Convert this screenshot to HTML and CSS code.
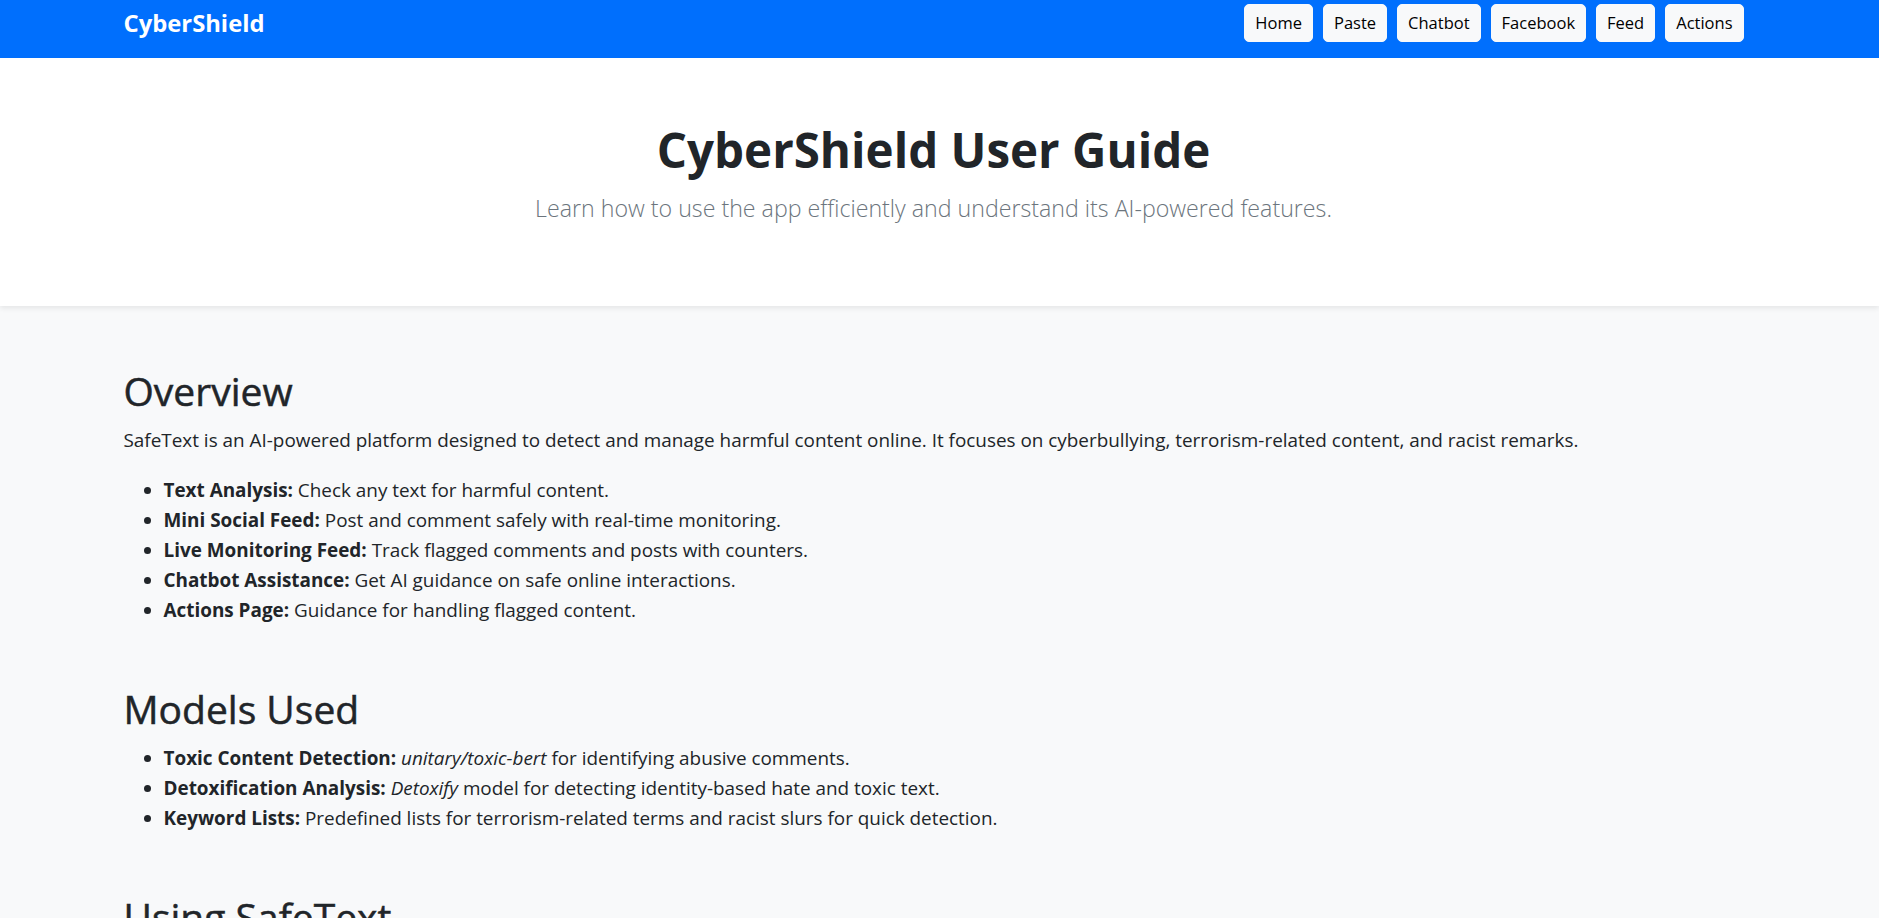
FILE: index.html
```html
<!DOCTYPE html>
<html lang="en">
<head>
<meta charset="utf-8">
<title>CyberShield User Guide</title>
<link rel="stylesheet" href="styles.css">
</head>
<body>
<nav class="navbar">
  <div class="container nav-inner">
    <a class="brand" href="#">CyberShield</a>
    <ul class="nav-links">
      <li><a class="btn" href="#">Home</a></li>
      <li><a class="btn" href="#">Paste</a></li>
      <li><a class="btn" href="#">Chatbot</a></li>
      <li><a class="btn" href="#">Facebook</a></li>
      <li><a class="btn" href="#">Feed</a></li>
      <li><a class="btn" href="#">Actions</a></li>
    </ul>
  </div>
</nav>
<header class="hero">
  <div class="container">
    <h1>CyberShield User Guide</h1>
    <p class="lead">Learn how to use the app efficiently and understand its AI-powered features.</p>
  </div>
</header>
<main class="content">
  <div class="container">
    <section class="guide-section">
      <h2>Overview</h2>
      <p>SafeText is an AI-powered platform designed to detect and manage harmful content online. It focuses on cyberbullying, terrorism-related content, and racist remarks.</p>
      <ul>
        <li><strong>Text Analysis:</strong> Check any text for harmful content.</li>
        <li><strong>Mini Social Feed:</strong> Post and comment safely with real-time monitoring.</li>
        <li><strong>Live Monitoring Feed:</strong> Track flagged comments and posts with counters.</li>
        <li><strong>Chatbot Assistance:</strong> Get AI guidance on safe online interactions.</li>
        <li><strong>Actions Page:</strong> Guidance for handling flagged content.</li>
      </ul>
    </section>
    <section class="guide-section">
      <h2>Models Used</h2>
      <ul>
        <li><strong>Toxic Content Detection:</strong> <em>unitary/toxic-bert</em> for identifying abusive comments.</li>
        <li><strong>Detoxification Analysis:</strong> <em>Detoxify</em> model for detecting identity-based hate and toxic text.</li>
        <li><strong>Keyword Lists:</strong> Predefined lists for terrorism-related terms and racist slurs for quick detection.</li>
      </ul>
    </section>
    <section class="guide-section">
      <h2>Using SafeText</h2>
      <ul>
        <li><strong>Paste:</strong> Paste any text to analyze it for harmful content.</li>
        <li><strong>Feed:</strong> Create posts and comments; flagged content is highlighted.</li>
        <li><strong>Actions:</strong> Review recommended steps for flagged content.</li>
      </ul>
    </section>
  </div>
</main>
</body>
</html>
```
FILE: styles.css
```css
html, body {
  margin: 0;
  padding: 0;
}

body {
  font-family: "Open Sans", "Noto Sans", "DejaVu Sans", sans-serif;
  font-size: 18.9px;
  line-height: 30px;
  color: #212529;
  background: #f8f9fa;
}

.container {
  width: 1620px;
  margin: 0 auto;
}

/* Navbar */
.navbar {
  background: #006ffd;
  padding: 4px 12px 16px 0;
}

.nav-inner {
  display: flex;
  justify-content: space-between;
  align-items: flex-start;
}

.brand {
  font-size: 23.8px;
  font-weight: 700;
  line-height: 38px;
  color: #ffffff;
  text-decoration: none;
}

.nav-links {
  display: flex;
  gap: 10px;
  list-style: none;
  margin: 0;
  padding: 0;
}

.btn {
  display: block;
  font-size: 16.5px;
  line-height: 26px;
  padding: 5px 10px;
  border: 1px solid #f8f9fa;
  border-radius: 5px;
  background: #f8f9fa;
  color: #000000;
  text-decoration: none;
}

/* Hero */
.hero {
  background: #ffffff;
  padding: 62px 12px 58px 0;
  text-align: center;
  box-shadow: 0 2.5px 5px rgba(0, 0, 0, 0.075);
}

.hero h1 {
  font-size: 47.5px;
  font-weight: 700;
  line-height: 60px;
  margin: 0 0 10px;
}

.lead {
  font-size: 23.2px;
  font-weight: 300;
  line-height: 37.5px;
  color: #6c757d;
  margin: 0 0 20px;
}

/* Content */
.content {
  padding: 61px 12px 40px 0;
}

.guide-section {
  margin-bottom: 60px;
}

.guide-section h2 {
  font-size: 39px;
  font-weight: 500;
  line-height: 48px;
  margin: 0 0 10px;
  -webkit-text-stroke: 0.5px #212529;
}

.guide-section p {
  margin: 0 0 20px;
}

.guide-section ul {
  margin: 0 0 20px;
  padding-left: 40px;
}
```
